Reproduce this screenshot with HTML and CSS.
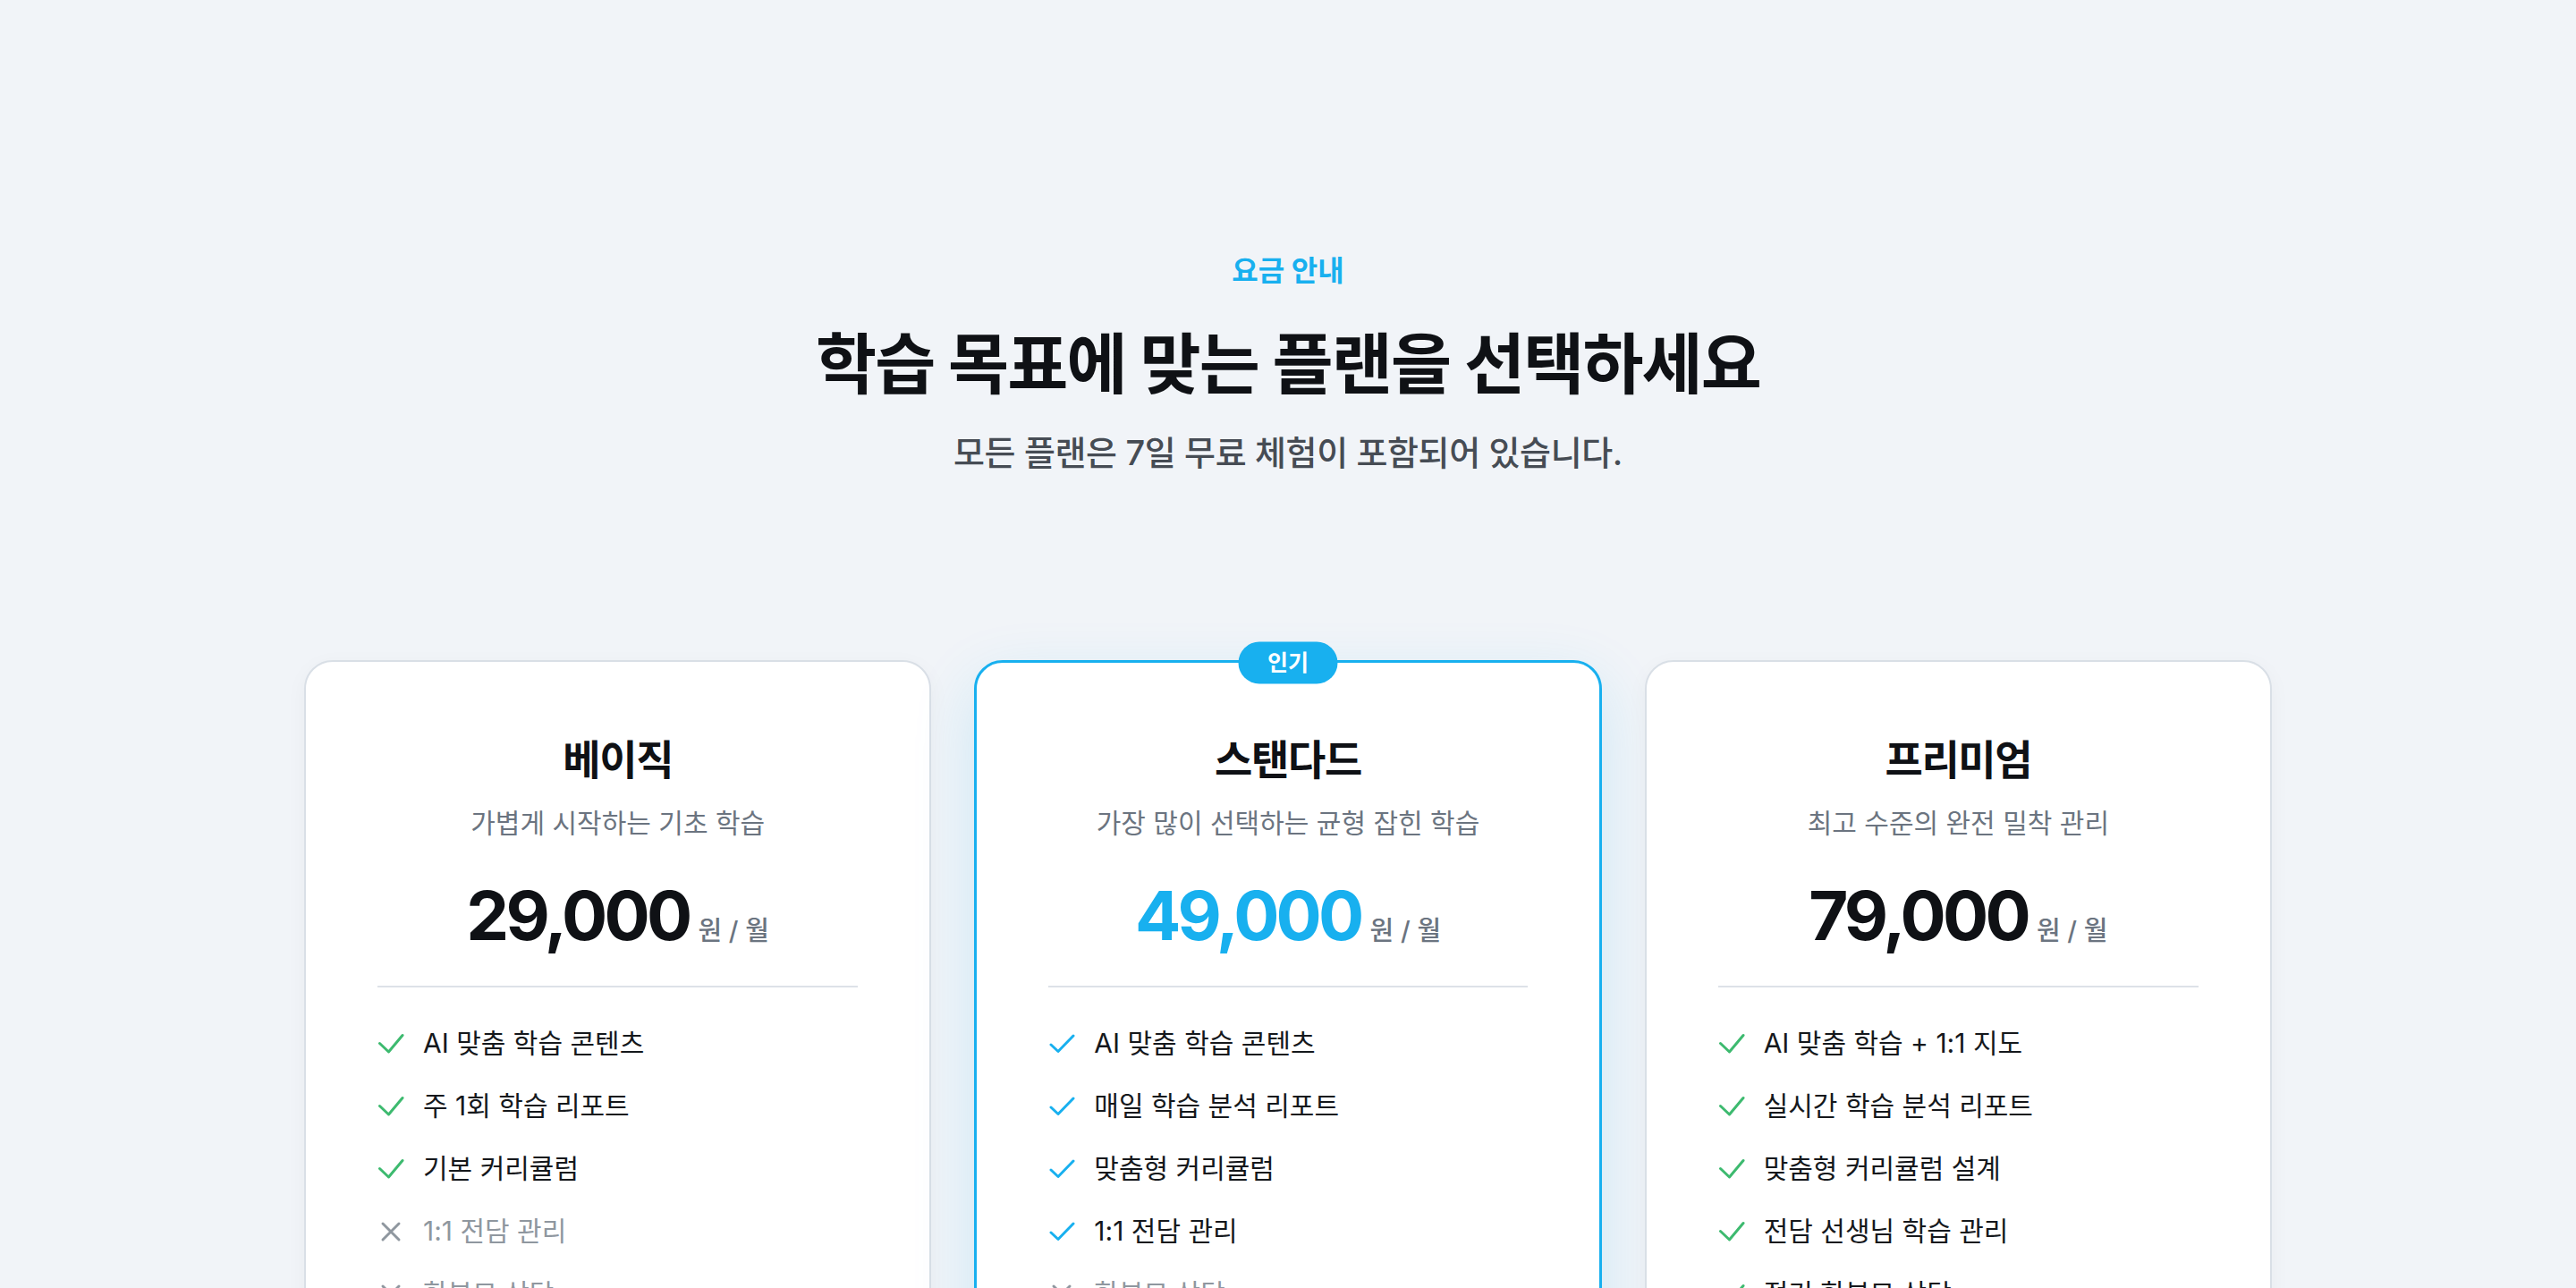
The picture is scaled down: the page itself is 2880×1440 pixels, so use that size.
FILE: index.html
```html
<!DOCTYPE html>
<html lang="ko">
<head>
<meta charset="utf-8">
<title>요금 안내</title>
<link rel="stylesheet" href="styles.css">
</head>
<body>
<main class="pricing">
  <header class="intro">
    <p class="eyebrow">요금 안내</p>
    <h1 class="headline">학습 목표에 맞는 플랜을 선택하세요</h1>
    <p class="lead">모든 플랜은 7일 무료 체험이 포함되어 있습니다.</p>
  </header>

  <div class="plans">
    <article class="plan">
      <h2 class="plan-name">베이직</h2>
      <p class="plan-desc">가볍게 시작하는 기초 학습</p>
      <div class="plan-price"><span class="amount">29,000</span><span class="unit">원 / 월</span></div>
      <hr class="divider">
      <ul class="features">
        <li class="feature"><svg class="icon check" viewBox="0 0 30 24"><path d="M2.5 11.5 L12.5 21 L28 2.5"/></svg><span>AI 맞춤 학습 콘텐츠</span></li>
        <li class="feature"><svg class="icon check" viewBox="0 0 30 24"><path d="M2.5 11.5 L12.5 21 L28 2.5"/></svg><span>주 1회 학습 리포트</span></li>
        <li class="feature"><svg class="icon check" viewBox="0 0 30 24"><path d="M2.5 11.5 L12.5 21 L28 2.5"/></svg><span>기본 커리큘럼</span></li>
        <li class="feature off"><svg class="icon cross" viewBox="0 0 30 24"><path d="M6 3 L24 21 M24 3 L6 21"/></svg><span>1:1 전담 관리</span></li>
        <li class="feature off"><svg class="icon cross" viewBox="0 0 30 24"><path d="M6 3 L24 21 M24 3 L6 21"/></svg><span>학부모 상담</span></li>
      </ul>
      <button class="cta">시작하기</button>
    </article>

    <article class="plan featured">
      <span class="badge">인기</span>
      <h2 class="plan-name">스탠다드</h2>
      <p class="plan-desc">가장 많이 선택하는 균형 잡힌 학습</p>
      <div class="plan-price"><span class="amount">49,000</span><span class="unit">원 / 월</span></div>
      <hr class="divider">
      <ul class="features">
        <li class="feature"><svg class="icon check" viewBox="0 0 30 24"><path d="M3 13 L11 20.5 L28 3"/></svg><span>AI 맞춤 학습 콘텐츠</span></li>
        <li class="feature"><svg class="icon check" viewBox="0 0 30 24"><path d="M3 13 L11 20.5 L28 3"/></svg><span>매일 학습 분석 리포트</span></li>
        <li class="feature"><svg class="icon check" viewBox="0 0 30 24"><path d="M3 13 L11 20.5 L28 3"/></svg><span>맞춤형 커리큘럼</span></li>
        <li class="feature"><svg class="icon check" viewBox="0 0 30 24"><path d="M3 13 L11 20.5 L28 3"/></svg><span>1:1 전담 관리</span></li>
        <li class="feature off"><svg class="icon cross" viewBox="0 0 30 24"><path d="M6 3 L24 21 M24 3 L6 21"/></svg><span>학부모 상담</span></li>
      </ul>
      <button class="cta">시작하기</button>
    </article>

    <article class="plan">
      <h2 class="plan-name">프리미엄</h2>
      <p class="plan-desc">최고 수준의 완전 밀착 관리</p>
      <div class="plan-price"><span class="amount">79,000</span><span class="unit">원 / 월</span></div>
      <hr class="divider">
      <ul class="features">
        <li class="feature"><svg class="icon check" viewBox="0 0 30 24"><path d="M2.5 11.5 L12.5 21 L28 2.5"/></svg><span>AI 맞춤 학습 + 1:1 지도</span></li>
        <li class="feature"><svg class="icon check" viewBox="0 0 30 24"><path d="M2.5 11.5 L12.5 21 L28 2.5"/></svg><span>실시간 학습 분석 리포트</span></li>
        <li class="feature"><svg class="icon check" viewBox="0 0 30 24"><path d="M2.5 11.5 L12.5 21 L28 2.5"/></svg><span>맞춤형 커리큘럼 설계</span></li>
        <li class="feature"><svg class="icon check" viewBox="0 0 30 24"><path d="M2.5 11.5 L12.5 21 L28 2.5"/></svg><span>전담 선생님 학습 관리</span></li>
        <li class="feature"><svg class="icon check" viewBox="0 0 30 24"><path d="M2.5 11.5 L12.5 21 L28 2.5"/></svg><span>정기 학부모 상담</span></li>
      </ul>
      <button class="cta">시작하기</button>
    </article>
  </div>
</main>
</body>
</html>
```

FILE: styles.css
```css
* { box-sizing: border-box; }

html, body {
  margin: 0;
  padding: 0;
}

body {
  background: #f1f4f8;
  font-family: "Inter", "Noto Sans CJK KR", sans-serif;
  color: #111418;
}

.pricing {
  padding: 281px 0 160px;
}

.intro {
  display: flex;
  flex-direction: column;
  align-items: center;
  text-align: center;
}

.eyebrow {
  margin: 0;
  font-size: 32px;
  line-height: 44px;
  font-weight: 700;
  color: #18b0ef;
}

.headline {
  margin: 35px 0 0;
  font-size: 74px;
  line-height: 94px;
  font-weight: 700;
  letter-spacing: -0.025em;
  color: #0f1115;
}

.lead {
  margin: 24px 0 0;
  font-size: 38px;
  line-height: 56px;
  font-weight: 500;
  letter-spacing: -0.01em;
  color: #464c54;
}

.plans {
  width: 2200px;
  margin: 204px auto 0;
  display: grid;
  grid-template-columns: repeat(3, 1fr);
  gap: 48px;
  align-items: start;
}

.plan {
  position: relative;
  background: #ffffff;
  border: 2px solid #d9dfe6;
  border-radius: 32px;
  padding: 79px 80px 80px;
  display: flex;
  flex-direction: column;
  align-items: center;
  box-shadow: 0 6px 24px rgba(15, 23, 42, 0.04);
}

.plan.featured {
  border: 3px solid #18b0ef;
  padding-top: 78px;
  box-shadow: 0 24px 70px rgba(24, 176, 239, 0.16);
}

.badge {
  position: absolute;
  top: 0;
  left: 50%;
  transform: translate(-50%, -50%);
  width: 111px;
  height: 47px;
  border-radius: 24px;
  background: #18b0ef;
  color: #ffffff;
  font-size: 25px;
  font-weight: 700;
  line-height: 47px;
  text-align: center;
}

.plan-name {
  margin: 0;
  font-size: 46px;
  line-height: 60px;
  font-weight: 700;
  letter-spacing: -0.03em;
  color: #0f1115;
}

.plan-desc {
  margin: 19px 0 0;
  font-size: 30px;
  line-height: 44px;
  font-weight: 400;
  color: #6b7480;
}

.plan-price {
  margin-top: 44px;
  display: flex;
  align-items: baseline;
  justify-content: center;
  gap: 10px;
}

.amount {
  font-family: "Inter", sans-serif;
  font-size: 76px;
  line-height: 74px;
  font-weight: 700;
  letter-spacing: -0.05em;
  color: #0f1115;
}

.featured .amount {
  color: #18b0ef;
}

.unit {
  font-size: 29px;
  font-weight: 500;
  color: #6b7480;
}

.divider {
  align-self: stretch;
  margin: 42px 0 0;
  border: 0;
  height: 2px;
  background: #dde2e8;
}

.features {
  align-self: stretch;
  list-style: none;
  margin: 41px 0 0;
  padding: 0;
  display: flex;
  flex-direction: column;
  gap: 27px;
}

.feature {
  display: flex;
  align-items: center;
  gap: 21px;
  font-size: 30px;
  line-height: 43px;
  font-weight: 400;
  letter-spacing: 0;
  color: #15181c;
}

.feature.off {
  color: #8f979f;
}

.icon {
  flex: none;
  width: 30px;
  height: 24px;
  fill: none;
  stroke-width: 3;
  stroke-linecap: round;
  stroke-linejoin: round;
}

.check { stroke: #3dba6f; }
.featured .check { stroke: #18b0ef; }
.cross { stroke: #8f979f; }

.cta {
  align-self: stretch;
  margin-top: 60px;
  height: 80px;
  border-radius: 20px;
  border: 2px solid #d9dfe6;
  background: #ffffff;
  font: inherit;
  font-size: 28px;
  font-weight: 700;
  color: #0f1115;
}

.featured .cta {
  background: #18b0ef;
  border-color: #18b0ef;
  color: #ffffff;
}
```
